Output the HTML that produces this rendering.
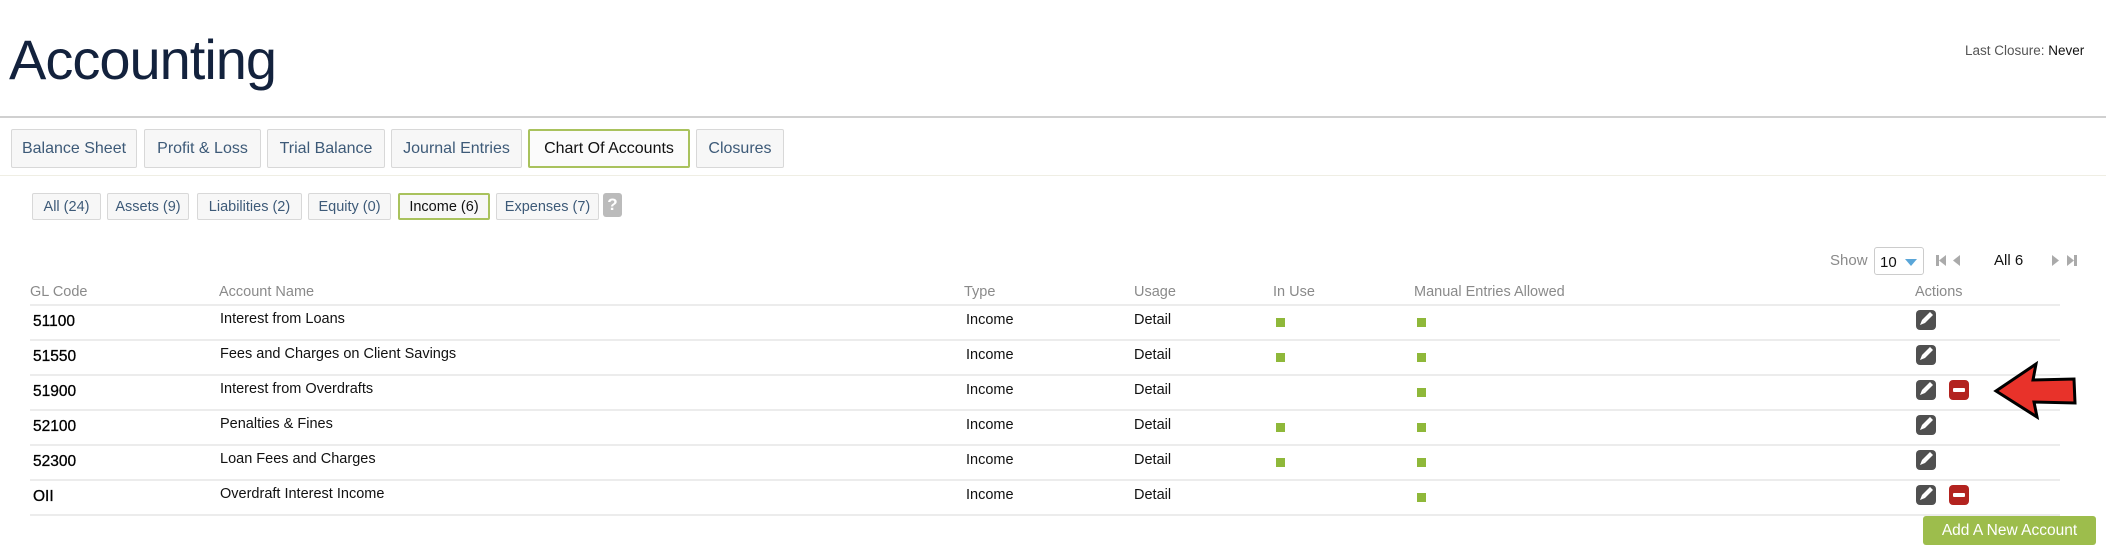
<!DOCTYPE html>
<html><head><meta charset="utf-8"><style>
*{margin:0;padding:0;box-sizing:border-box}
body{width:2106px;height:554px;background:#fff;font-family:"Liberation Sans",sans-serif;position:relative;overflow:hidden}
.a{position:absolute;white-space:nowrap}
.tab{position:absolute;top:129px;height:39px;border:1px solid #d8d8d8;background:#f7f7f7;color:#3d5a78;font-size:16px;line-height:38px;text-align:center;border-radius:2px}
.tab.on{border:2px solid #a9c25d;color:#111;background:#fbfbfb;line-height:36px}
.pill{position:absolute;top:193px;height:27px;border:1px solid #d8d8d8;background:#f7f7f7;color:#3d5a78;font-size:14.5px;line-height:26px;text-align:center;border-radius:2px}
.pill.on{border:2px solid #a9c25d;color:#111;line-height:24px}
.h{position:absolute;top:284px;color:#8a8a8a;font-size:14.5px}
.line{position:absolute;left:30px;width:2030px;height:2px;background:#ececec}
.c{position:absolute;font-size:14.5px;color:#111}
.gl{font-size:15.5px;color:#000;-webkit-text-stroke:0.3px #000}
.sq{position:absolute;width:9px;height:9px;background:#8fb83a}
.ed{position:absolute;width:20px;height:20px;border-radius:4px;background:#505050}
.del{position:absolute;width:20px;height:20px;border-radius:4px;background:#b3231f}
.del:after{content:"";position:absolute;left:4px;top:8px;width:12px;height:4px;background:#fff;border-radius:1px}
</style></head><body>
<div class="a" style="left:9px;top:27px;font-size:56px;color:#13223d;letter-spacing:-1px">Accounting</div>
<div class="a" style="left:1965px;top:43px;font-size:13.5px;color:#555">Last Closure: <span style="color:#111">Never</span></div>
<div class="a" style="left:0;top:116px;width:2106px;height:2px;background:#d0d0d0"></div>
<div class="tab" style="left:11px;width:126px">Balance Sheet</div>
<div class="tab" style="left:144px;width:117px">Profit &amp; Loss</div>
<div class="tab" style="left:267px;width:118px">Trial Balance</div>
<div class="tab" style="left:391px;width:131px">Journal Entries</div>
<div class="tab on" style="left:528px;width:162px">Chart Of Accounts</div>
<div class="tab" style="left:696px;width:88px">Closures</div>
<div class="a" style="left:0;top:175px;width:2106px;height:1px;background:#efeee4"></div>
<div class="pill" style="left:32px;width:69px">All (24)</div>
<div class="pill" style="left:107px;width:82px">Assets (9)</div>
<div class="pill" style="left:197px;width:105px">Liabilities (2)</div>
<div class="pill" style="left:308px;width:83px">Equity (0)</div>
<div class="pill on" style="left:398px;width:92px">Income (6)</div>
<div class="pill" style="left:496px;width:103px">Expenses (7)</div>
<div class="a" style="left:603px;top:193px;width:19px;height:24px;background:#bbb;border-radius:3px;color:#fff;font-weight:bold;font-size:17px;text-align:center;line-height:24px">?</div>
<div class="a" style="left:1830px;top:252px;font-size:15px;color:#8a8a8a">Show</div>
<div class="a" style="left:1874px;top:247px;width:50px;height:28px;border:1px solid #ccc;border-radius:3px;font-size:15px;color:#111;padding:6px 0 0 5px">10<span style="position:absolute;right:6px;top:11px;border-left:6px solid transparent;border-right:6px solid transparent;border-top:7px solid #5aa6d8"></span></div>
<svg class="a" style="left:1936px;top:254px" width="32" height="14"><rect x="0" y="1" width="3" height="11" fill="#aaa"/><path d="M3 6.5 L10 1 V12Z" fill="#aaa"/><path d="M17 6.5 L24 1 V12Z" fill="#aaa"/></svg>
<div class="a" style="left:1994px;top:252px;font-size:15px;color:#111">All 6</div>
<svg class="a" style="left:2051px;top:254px" width="32" height="14"><path d="M1 1 L8 6.5 L1 12Z" fill="#aaa"/><path d="M16 1 L23 6.5 L16 12Z" fill="#aaa"/><rect x="23" y="1" width="3" height="11" fill="#aaa"/></svg>
<div class="h" style="left:30px">GL Code</div>
<div class="h" style="left:219px">Account Name</div>
<div class="h" style="left:964px">Type</div>
<div class="h" style="left:1134px">Usage</div>
<div class="h" style="left:1273px">In Use</div>
<div class="h" style="left:1414px">Manual Entries Allowed</div>
<div class="h" style="left:1915px">Actions</div>
<div class="line" style="top:304px"></div>
<div class="line" style="top:339px"></div>
<div class="line" style="top:374px"></div>
<div class="line" style="top:409px"></div>
<div class="line" style="top:444px"></div>
<div class="line" style="top:479px"></div>
<div class="line" style="top:514px"></div>

<div class="c gl" style="left:33px;top:313px">51100</div><div class="c" style="left:220px;top:311px">Interest from Loans</div><div class="c" style="left:966px;top:312px">Income</div><div class="c" style="left:1134px;top:312px">Detail</div><div class="sq" style="left:1276px;top:318px"></div><div class="sq" style="left:1417px;top:318px"></div><div class="ed" style="left:1916px;top:310px"></div>
<div class="c gl" style="left:33px;top:348px">51550</div><div class="c" style="left:220px;top:346px">Fees and Charges on Client Savings</div><div class="c" style="left:966px;top:347px">Income</div><div class="c" style="left:1134px;top:347px">Detail</div><div class="sq" style="left:1276px;top:353px"></div><div class="sq" style="left:1417px;top:353px"></div><div class="ed" style="left:1916px;top:345px"></div>
<div class="c gl" style="left:33px;top:383px">51900</div><div class="c" style="left:220px;top:381px">Interest from Overdrafts</div><div class="c" style="left:966px;top:382px">Income</div><div class="c" style="left:1134px;top:382px">Detail</div><div class="sq" style="left:1417px;top:388px"></div><div class="ed" style="left:1916px;top:380px"></div><div class="del" style="left:1949px;top:380px"></div>
<div class="c gl" style="left:33px;top:418px">52100</div><div class="c" style="left:220px;top:416px">Penalties &amp; Fines</div><div class="c" style="left:966px;top:417px">Income</div><div class="c" style="left:1134px;top:417px">Detail</div><div class="sq" style="left:1276px;top:423px"></div><div class="sq" style="left:1417px;top:423px"></div><div class="ed" style="left:1916px;top:415px"></div>
<div class="c gl" style="left:33px;top:453px">52300</div><div class="c" style="left:220px;top:451px">Loan Fees and Charges</div><div class="c" style="left:966px;top:452px">Income</div><div class="c" style="left:1134px;top:452px">Detail</div><div class="sq" style="left:1276px;top:458px"></div><div class="sq" style="left:1417px;top:458px"></div><div class="ed" style="left:1916px;top:450px"></div>
<div class="c gl" style="left:33px;top:488px">OII</div><div class="c" style="left:220px;top:486px">Overdraft Interest Income</div><div class="c" style="left:966px;top:487px">Income</div><div class="c" style="left:1134px;top:487px">Detail</div><div class="sq" style="left:1417px;top:493px"></div><div class="ed" style="left:1916px;top:485px"></div><div class="del" style="left:1949px;top:485px"></div>

<svg class="a" style="left:0;top:0" width="2106" height="554">
<g fill="#fff">
<path d="M1920 325 l2 -5 l8 -8 l3 3 l-8 8 z"/>
<path d="M1920 360 l2 -5 l8 -8 l3 3 l-8 8 z"/>
<path d="M1920 395 l2 -5 l8 -8 l3 3 l-8 8 z"/>
<path d="M1920 430 l2 -5 l8 -8 l3 3 l-8 8 z"/>
<path d="M1920 465 l2 -5 l8 -8 l3 3 l-8 8 z"/>
<path d="M1920 500 l2 -5 l8 -8 l3 3 l-8 8 z"/>
</g>
<path d="M1996 391 L2036 364 L2033 380 L2074 379 L2075 403 L2034 402 L2037 417 Z" fill="#e8322a" stroke="#000" stroke-width="3" stroke-linejoin="miter"/>
</svg>
<div class="a" style="left:1923px;top:516px;width:173px;height:29px;background:#9dbd4c;border-radius:3px;color:#fff;font-size:15.5px;text-align:center;line-height:29px">Add A New Account</div>
</body></html>
